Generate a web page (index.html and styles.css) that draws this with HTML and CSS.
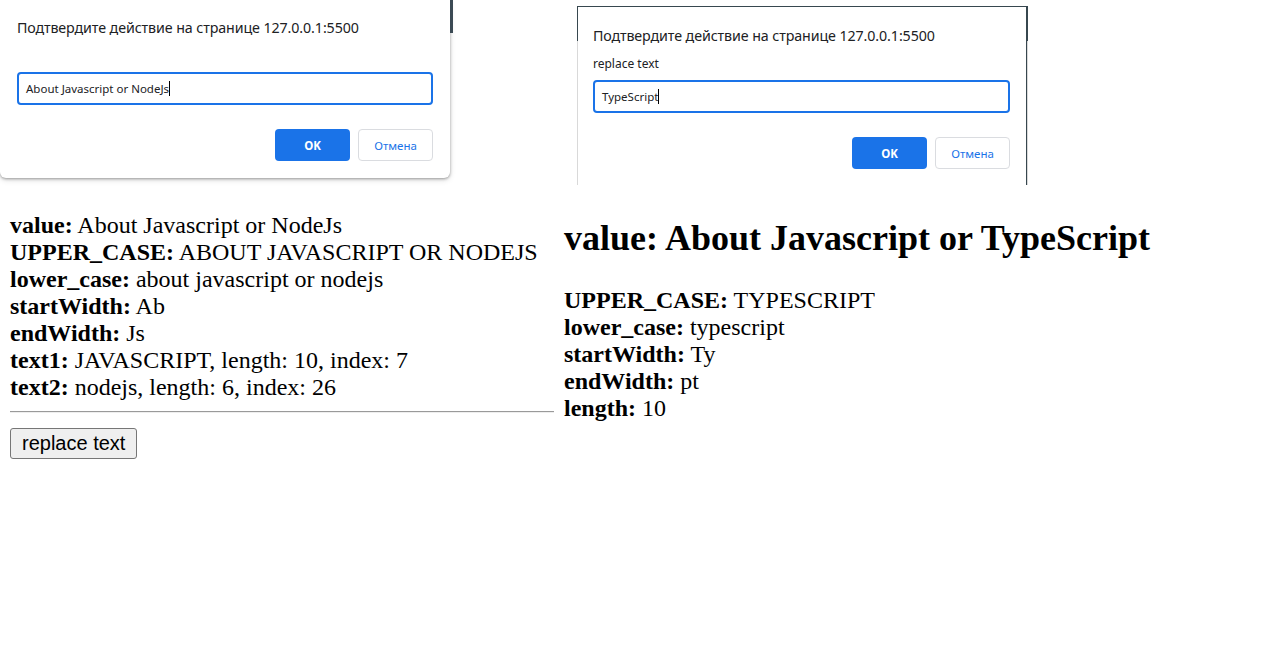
FILE: index.html
```html
<!DOCTYPE html>
<html lang="ru">
<head>
<meta charset="utf-8">
<title>String methods</title>
<link rel="stylesheet" href="styles.css">
</head>
<body>
<div class="shots">
  <div class="shot shot-left">
    <div class="dialog dialog-left">
      <div class="dlg-title">Подтвердите действие на странице 127.0.0.1:5500</div>
      <div class="dlg-input">About Javascript or NodeJs<span class="caret"></span></div>
      <div class="dlg-actions">
        <span class="btn-ok">OK</span>
        <span class="btn-cancel">Отмена</span>
      </div>
    </div>
    <div class="strip"></div>
  </div>
  <div class="shot shot-right">
    <div class="frame">
      <div class="dialog dialog-right">
        <div class="dlg-title">Подтвердите действие на странице 127.0.0.1:5500</div>
        <div class="dlg-label">replace text</div>
        <div class="dlg-input">TypeScript<span class="caret"></span></div>
        <div class="dlg-actions">
          <span class="btn-ok">OK</span>
          <span class="btn-cancel">Отмена</span>
        </div>
      </div>
    </div>
  </div>
</div>
<div class="content">
  <div class="col col-left">
    <div class="line"><b>value:</b> About Javascript or NodeJs</div>
    <div class="line"><b>UPPER_CASE:</b> ABOUT JAVASCRIPT OR NODEJS</div>
    <div class="line"><b>lower_case:</b> about javascript or nodejs</div>
    <div class="line"><b>startWidth:</b> Ab</div>
    <div class="line"><b>endWidth:</b> Js</div>
    <div class="line"><b>text1:</b> JAVASCRIPT, length: 10, index: 7</div>
    <div class="line"><b>text2:</b> nodejs, length: 6, index: 26</div>
    <hr class="sep">
    <button class="replace">replace text</button>
  </div>
  <div class="col col-right">
    <h1 class="heading">value: About Javascript or TypeScript</h1>
    <div class="line"><b>UPPER_CASE:</b> TYPESCRIPT</div>
    <div class="line"><b>lower_case:</b> typescript</div>
    <div class="line"><b>startWidth:</b> Ty</div>
    <div class="line"><b>endWidth:</b> pt</div>
    <div class="line"><b>length:</b> 10</div>
  </div>
</div>
</body>
</html>
```
FILE: styles.css
```css
html, body {
  margin: 0;
  padding: 0;
  background: #fff;
}
body {
  width: 1278px;
  height: 660px;
  overflow: hidden;
  font-family: "Liberation Serif", "Times New Roman", serif;
  color: #000;
}
.shots {
  display: flex;
  height: 200px;
}
.shot-left {
  width: 577px;
  display: flex;
  align-items: flex-start;
}
.dialog {
  background: #fff;
  font-family: "Noto Sans", "Open Sans", sans-serif;
  color: #202124;
  box-sizing: border-box;
}
.dialog-left {
  width: 450px;
  height: 178px;
  border-radius: 0 0 6px 6px;
  box-shadow: 0 1px 3px rgba(0,0,0,0.35), 0 2px 6px rgba(0,0,0,0.12);
  padding: 19px 17px 0 17px;
}
.strip {
  width: 3px;
  height: 33px;
  background: #3b4a54;
}
.dlg-title {
  font-size: 14.25px;
  line-height: 18px;
  height: 18px;
  white-space: nowrap;
  letter-spacing: -0.1px;
}
.dialog-left .dlg-title {
  margin-bottom: 35px;
}
.dlg-label {
  font-size: 12px;
  line-height: 16px;
  margin: 11px 0 8px;
}
.dlg-input {
  height: 33px;
  box-sizing: border-box;
  border: 2px solid #1a73e8;
  border-radius: 4px;
  font-size: 11.5px;
  line-height: 29px;
  padding-left: 7px;
  color: #202124;
  display: flex;
  align-items: center;
}
.caret {
  display: inline-block;
  width: 1px;
  height: 15px;
  background: #000;
}
.dlg-actions {
  display: flex;
  justify-content: flex-end;
  gap: 8px;
  margin-top: 24px;
}
.btn-ok, .btn-cancel {
  width: 75px;
  height: 32px;
  box-sizing: border-box;
  border-radius: 4px;
  font-size: 11.5px;
  display: flex;
  align-items: center;
  justify-content: center;
}
.btn-ok {
  background: #1a73e8;
  color: #fff;
  font-weight: 700;
}
.btn-cancel {
  border: 1px solid #dadce0;
  color: #1a73e8;
  background: #fff;
}
.shot-right {
  padding-top: 6px;
}
.frame {
  width: 451px;
  height: 179px;
  box-sizing: border-box;
  border-top: 1px solid #37474f;
  border-left: 1px solid #37474f;
  border-right: 2px solid #37474f;
  background: #fff;
  position: relative;
}
.frame::before, .frame::after {
  content: "";
  position: absolute;
  top: 34px;
  bottom: 0;
  width: 1px;
  background: #d9d9d9;
}
.frame::before { left: -1px; }
.frame::after { right: -2px; }
.dialog-right {
  padding: 20px 16px 0 15px;
  height: 100%;
}
.dialog-right .dlg-actions {
  margin-top: 24px;
}
.content {
  display: flex;
  padding: 12px 0 0 10px;
}
.col-left {
  width: 544px;
}
.col-right {
  margin-left: 10px;
}
.line {
  font-size: 24px;
  line-height: 27px;
  white-space: nowrap;
}
.heading {
  font-size: 36px;
  line-height: 40px;
  margin: 6px 0 29px;
  white-space: nowrap;
}
.sep {
  margin: 10px 0 15px;
  border: 0;
  border-top: 1px solid #9a9a9a;
  border-bottom: 1px solid #eeeeee;
  height: 0;
}
.replace {
  font-family: "Liberation Sans", Arial, sans-serif;
  font-size: 20px;
  height: 31px;
  padding: 0 11px;
  background: #efefef;
  border: 1px solid #767676;
  border-radius: 3px;
  color: #000;
}
```
